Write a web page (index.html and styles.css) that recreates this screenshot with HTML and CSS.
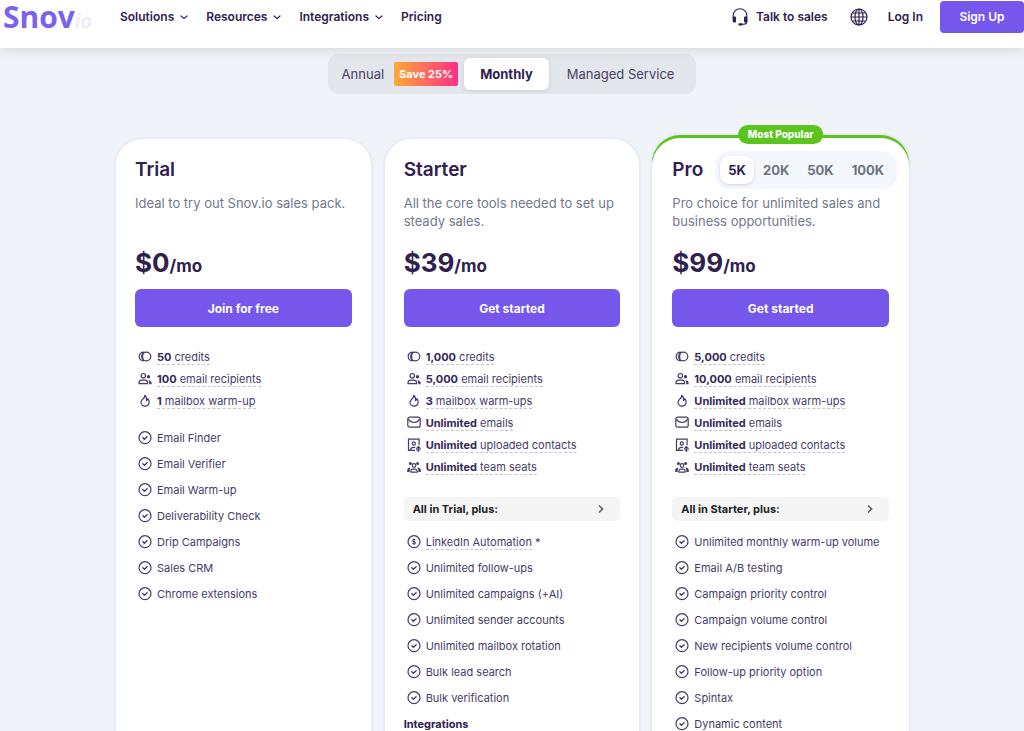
FILE: index.html
```html
<!DOCTYPE html>
<html lang="en">
<head>
<meta charset="utf-8">
<meta name="viewport" content="width=device-width, initial-scale=1">
<title>Snov.io Pricing</title>
<link rel="stylesheet" href="styles.css">
</head>
<body>
<svg class="sprite" aria-hidden="true">
  <symbol id="chevron" viewBox="0 0 8 5"><path d="M1 1l3 2.600 3-2.600" fill="none" stroke="currentColor" stroke-width="1.200" stroke-linecap="round" stroke-linejoin="round"/></symbol>
  <symbol id="headset" viewBox="0 0 16 18"><path d="M1.200 11V7.500a6.800 6.800 0 0 1 13.600 0V13.500q0 2.600-3 2.700H10" fill="none" stroke="currentColor" stroke-width="1.100"/><rect x=".7" y="8.500" width="3.300" height="6" rx="1" fill="currentColor"/><rect x="12" y="8.500" width="3.300" height="6" rx="1" fill="currentColor"/><rect x="6.300" y="15.300" width="4.500" height="2.200" rx="1.100" fill="currentColor"/></symbol>
  <symbol id="globe" viewBox="0 0 18 18"><g fill="none" stroke="currentColor" stroke-width="1.200"><circle cx="9" cy="9" r="8"/><ellipse cx="9" cy="9" rx="4" ry="8"/><path d="M9 1v16M1 9h16M2.500 5h13M2.500 13h13"/></g></symbol>
  <symbol id="credits" viewBox="0 0 14 14"><g fill="none" stroke="currentColor" stroke-width="1.200"><ellipse cx="8.200" cy="6.500" rx="4.600" ry="4.300"/><path d="M5.800 2.200C2.800 2.200 1.200 4 1.200 6.500s1.600 4.300 4.600 4.300M5.800 2.200Q4.600 4 4.600 6.500t1.200 4.300"/></g></symbol>
  <symbol id="people" viewBox="0 0 14 14"><g fill="none" stroke="currentColor" stroke-width="1.200"><circle cx="5.300" cy="3.700" r="2.200"/><path d="M1 11.700V10.500q.3-2.300 2.800-2.300h3Q9.300 8.200 9.600 10.500v1.200z" stroke-linejoin="round"/></g><circle cx="10.500" cy="4.700" r="1.700" fill="currentColor"/><path d="M10.300 8.200q3 .1 3.300 2.500v1.600h-2.400V10.500q0-1.300-.9-2.300z" fill="currentColor"/></symbol>
  <symbol id="flame" viewBox="0 0 14 14"><path d="M6.700 1.300Q7 3.700 4.600 5.300 3 6.700 3 8.200a4.100 3.900 0 0 0 8.200 0Q11.200 6.200 9.800 4.700q-.2 1.600-1.300 2Q9 2.900 6.700 1.300z" fill="none" stroke="currentColor" stroke-width="1.200" stroke-linejoin="round"/></symbol>
  <symbol id="mail" viewBox="0 0 14 14"><g fill="none" stroke="currentColor" stroke-width="1.200" stroke-linejoin="round"><rect x=".8" y="1.200" width="12.400" height="10" rx="2"/><path d="M1.200 3.200Q3.500 6.500 7 6.500T12.800 3.200"/></g></symbol>
  <symbol id="contacts" viewBox="0 0 14 14"><g fill="none" stroke="currentColor" stroke-width="1.200"><path d="M8 12.400H1.500V1.200h10.600v6"/><circle cx="6.800" cy="5.500" r="1.600"/><path d="M3.500 12q.2-2.700 3.300-2.700h1.400M11.300 14V9M9.200 10.800L11.300 8.700l2.200 2.100M9.200 12h4.400"/></g></symbol>
  <symbol id="team" viewBox="0 0 14 14"><g fill="none" stroke="currentColor" stroke-width="1.200"><circle cx="7" cy="5.500" r="1.800"/><path d="M3.800 12.100v-1q.2-2 2-2h2.400q1.800 0 2 2v1z" stroke-linejoin="round"/></g><g fill="currentColor"><circle cx="3.400" cy="3.500" r="1.500"/><circle cx="10.600" cy="3.500" r="1.500"/><path d="M.2 12v-2Q.6 7.500 3.600 7.500q-1 1.200-1 4.500zM13.800 12v-2Q13.400 7.500 10.400 7.500q1 1.200 1 4.500z"/></g></symbol>
  <symbol id="check" viewBox="0 0 14 14"><g fill="none" stroke="currentColor" stroke-width="1.200"><circle cx="7" cy="6.700" r="6"/><path d="M4.900 6.700l1.500 1.500 2.700-2.500" stroke-linecap="round" stroke-linejoin="round" stroke-width="1.400"/></g></symbol>
  <symbol id="coin" viewBox="0 0 14 14"><g fill="none" stroke="currentColor" stroke-width="1.200"><circle cx="7" cy="6.700" r="6"/><path d="M8.600 5.200Q8.300 4.400 7 4.400q-1.600 0-1.600 1.100T7 6.700t1.600 1.200T7 9q-1.300 0-1.600-.8M7 3.500v6.400" stroke-width="1"/></g></symbol>
  <symbol id="arrow" viewBox="0 0 8 10"><path d="M2 1.500L5.500 5 2 8.500" fill="none" stroke="currentColor" stroke-width="1.700"/></symbol>
</svg>

<header class="header">
  <a class="logo" href="#">Snov<span class="logo-suffix">io</span></a>
  <nav class="nav">
    <a href="#">Solutions <svg class="chevron"><use href="#chevron"/></svg></a>
    <a href="#">Resources <svg class="chevron"><use href="#chevron"/></svg></a>
    <a href="#">Integrations <svg class="chevron"><use href="#chevron"/></svg></a>
    <a href="#">Pricing</a>
  </nav>
  <div class="account">
    <a class="talk" href="#"><svg class="headset"><use href="#headset"/></svg>Talk to sales</a>
    <button class="language" type="button" aria-label="Language"><svg class="globe"><use href="#globe"/></svg></button>
    <a href="#">Log In</a>
    <a class="signup" href="#">Sign Up</a>
  </div>
</header>

<main class="main">
  <div class="periods">
    <button class="period" type="button">Annual <span class="save">Save 25%</span></button>
    <button class="period period-active" type="button">Monthly</button>
    <button class="period period-managed" type="button">Managed Service</button>
  </div>

  <div class="plans">
    <section class="plan">
      <div class="plan-head"><h2>Trial</h2></div>
      <p class="summary">Ideal to try out Snov.io sales pack.</p>
      <p class="price">$0<span>/mo</span></p>
      <button class="cta" type="button">Join for free</button>
      <ul class="limits">
        <li><svg><use href="#credits"/></svg><span><b>50</b> credits</span></li>
        <li><svg><use href="#people"/></svg><span><b>100</b> email recipients</span></li>
        <li><svg><use href="#flame"/></svg><span><b>1</b> mailbox warm-up</span></li>
      </ul>
      <ul class="features">
        <li><svg><use href="#check"/></svg>Email Finder</li>
        <li><svg><use href="#check"/></svg>Email Verifier</li>
        <li><svg><use href="#check"/></svg>Email Warm-up</li>
        <li><svg><use href="#check"/></svg>Deliverability Check</li>
        <li><svg><use href="#check"/></svg>Drip Campaigns</li>
        <li><svg><use href="#check"/></svg>Sales CRM</li>
        <li><svg><use href="#check"/></svg>Chrome extensions</li>
      </ul>
    </section>

    <section class="plan">
      <div class="plan-head"><h2>Starter</h2></div>
      <p class="summary">All the core tools needed to set up steady sales.</p>
      <p class="price">$39<span>/mo</span></p>
      <button class="cta" type="button">Get started</button>
      <ul class="limits">
        <li><svg><use href="#credits"/></svg><span><b>1,000</b> credits</span></li>
        <li><svg><use href="#people"/></svg><span><b>5,000</b> email recipients</span></li>
        <li><svg><use href="#flame"/></svg><span><b>3</b> mailbox warm-ups</span></li>
        <li><svg><use href="#mail"/></svg><span><b>Unlimited</b> emails</span></li>
        <li><svg><use href="#contacts"/></svg><span><b>Unlimited</b> uploaded contacts</span></li>
        <li><svg><use href="#team"/></svg><span><b>Unlimited</b> team seats</span></li>
      </ul>
      <button class="includes" type="button">All in Trial, plus:<svg><use href="#arrow"/></svg></button>
      <ul class="features">
        <li><svg><use href="#coin"/></svg><span class="hint">LinkedIn Automation</span>&nbsp;*</li>
        <li><svg><use href="#check"/></svg>Unlimited follow-ups</li>
        <li><svg><use href="#check"/></svg>Unlimited campaigns (+AI)</li>
        <li><svg><use href="#check"/></svg>Unlimited sender accounts</li>
        <li><svg><use href="#check"/></svg>Unlimited mailbox rotation</li>
        <li><svg><use href="#check"/></svg>Bulk lead search</li>
        <li><svg><use href="#check"/></svg>Bulk verification</li>
      </ul>
      <h3>Integrations</h3>
    </section>

    <section class="plan plan-popular">
      <span class="badge">Most Popular</span>
      <div class="plan-head">
        <h2>Pro</h2>
        <div class="tiers">
          <button class="tier tier-active" type="button">5K</button>
          <button class="tier" type="button">20K</button>
          <button class="tier" type="button">50K</button>
          <button class="tier" type="button">100K</button>
        </div>
      </div>
      <p class="summary">Pro choice for unlimited sales and business opportunities.</p>
      <p class="price">$99<span>/mo</span></p>
      <button class="cta" type="button">Get started</button>
      <ul class="limits">
        <li><svg><use href="#credits"/></svg><span><b>5,000</b> credits</span></li>
        <li><svg><use href="#people"/></svg><span><b>10,000</b> email recipients</span></li>
        <li><svg><use href="#flame"/></svg><span><b>Unlimited</b> mailbox warm-ups</span></li>
        <li><svg><use href="#mail"/></svg><span><b>Unlimited</b> emails</span></li>
        <li><svg><use href="#contacts"/></svg><span><b>Unlimited</b> uploaded contacts</span></li>
        <li><svg><use href="#team"/></svg><span><b>Unlimited</b> team seats</span></li>
      </ul>
      <button class="includes" type="button">All in Starter, plus:<svg><use href="#arrow"/></svg></button>
      <ul class="features">
        <li><svg><use href="#check"/></svg>Unlimited monthly warm-up volume</li>
        <li><svg><use href="#check"/></svg>Email A/B testing</li>
        <li><svg><use href="#check"/></svg>Campaign priority control</li>
        <li><svg><use href="#check"/></svg>Campaign volume control</li>
        <li><svg><use href="#check"/></svg>New recipients volume control</li>
        <li><svg><use href="#check"/></svg>Follow-up priority option</li>
        <li><svg><use href="#check"/></svg>Spintax</li>
        <li><svg><use href="#check"/></svg>Dynamic content</li>
      </ul>
    </section>
  </div>
</main>
</body>
</html>
```

FILE: styles.css
```css
* { box-sizing: border-box; }

html { scrollbar-width: none; }

body {
  margin: 0;
  background: #f0f3f8;
  color: #2f2050;
  font-family: Inter, "Liberation Sans", sans-serif;
}

h2, h3, p, ul { margin: 0; padding: 0; }
ul { list-style: none; }
a { color: inherit; text-decoration: none; }
button { margin: 0; padding: 0; border: 0; background: none; color: inherit; font: inherit; cursor: pointer; }
.sprite { display: none; }

/* Header */
.header {
  position: relative;
  display: flex;
  align-items: flex-start;
  height: 48px;
  padding-left: 3px;
  background: #fff;
  box-shadow: 0 2px 10px rgba(47, 52, 60, .14);
  font-size: 12px;
  font-weight: 600;
  line-height: 34px;
}
.logo {
  width: 117px;
  color: #7b61ee;
  font: 700 30px/34px "Open Sans", sans-serif;
}
.logo-suffix { color: #eee6fd; font-size: 20px; font-style: italic; font-weight: 600; }
.nav { display: flex; gap: 18px; }
.nav a { display: flex; align-items: center; gap: 6px; }
.chevron { width: 8px; height: 5px; }
.account { display: flex; align-items: center; margin-left: auto; }
.talk { display: flex; align-items: center; gap: 8px; }
.headset { width: 16px; height: 18px; }
.language { display: flex; margin: 0 20px 0 22px; }
.globe { width: 18px; height: 18px; }
.signup {
  width: 84px;
  margin-left: 17px;
  border-radius: 4px;
  background: #7558eb;
  color: #fff;
  line-height: 32px;
  text-align: center;
}

/* Billing period */
.main { padding-top: 6px; }
.periods {
  display: flex;
  align-items: center;
  width: fit-content;
  height: 40px;
  margin: 0 auto;
  padding: 0 4px 0 14px;
  border-radius: 10px;
  background: #e3e6eb;
  color: #4b4168;
  font-size: 13px;
}
.period { display: flex; align-items: center; gap: 10px; }
.save {
  padding: 0 5px;
  border-radius: 2px;
  background: linear-gradient(90deg, #ffa936, #ff2f87);
  color: #fff;
  font-size: 11px;
  font-weight: 700;
  line-height: 24px;
}
.period-active {
  height: 32px;
  margin-left: 6px;
  padding: 0 16px;
  border-radius: 6px;
  background: #fff;
  box-shadow: 0 1px 4px rgba(47, 52, 80, .14);
  color: #2f2050;
  font-weight: 700;
}
.period-managed { padding: 0 18px; }

/* Plans */
.plans {
  display: grid;
  grid-template-columns: repeat(3, minmax(0, 1fr));
  gap: 12px;
  max-width: 794px;
  margin: 44px auto 0;
}
.plan {
  position: relative;
  display: flex;
  flex-direction: column;
  padding: 12px 19px 24px;
  border: 1px solid #e9edf5;
  border-radius: 28px 28px 0 0;
  background: #fff;
  box-shadow: 0 0 3px rgba(70, 90, 130, .08);
}
.plan-popular {
  margin-top: -3px;
  padding: 16px 20px 24px;
  border: 0;
  box-shadow: inset 0 3px 0 #5bc41f, 0 0 3px rgba(70, 90, 130, .2);
}
.badge {
  position: absolute;
  top: -10px;
  left: 50%;
  padding: 0 10px;
  border-radius: 10px;
  background: #5bc41f;
  color: #fff;
  font-size: 10px;
  font-weight: 800;
  line-height: 19px;
  white-space: nowrap;
  transform: translateX(-50%);
}
.plan-head { display: flex; align-items: center; gap: 12px; height: 38px; }
.plan h2 { font-size: 19px; font-weight: 600; line-height: 24px; }
.tiers {
  display: flex;
  flex: none;
  align-items: center;
  height: 38px;
  padding: 0 4px 0 5px;
  border-radius: 14px;
  background: #f4f7fe;
}
.tier { height: 28px; padding: 0 9px; border-radius: 9px; color: #6c737f; font-size: 13px; font-weight: 700; }
.tier-active { padding: 0 8px; background: #fff; box-shadow: 0 1px 3px rgba(47, 52, 80, .18); color: #2f2050; }
.summary { min-height: 36px; margin-top: 5px; color: #73798a; font-size: 13px; line-height: 18px; }
.price { margin-top: 17px; font-size: 26px; font-weight: 700; line-height: 32px; }
.price span { font-size: 17px; }
.cta {
  height: 38px;
  margin-top: 7px;
  border-radius: 6px;
  background: #7558eb;
  color: #fff;
  font-size: 12px;
  font-weight: 700;
}
.limits { margin-top: 19px; color: #463b68; font-size: 11px; }
.limits li { height: 22px; }
.features li { height: 26px; }
.limits li, .features li { display: flex; align-items: center; }
.limits svg, .features svg { flex: none; width: 14px; height: 14px; margin: 0 5px 0 3px; }
.limits span, .hint { border-bottom: 1px dashed #c6c4d0; line-height: 14px; }
.limits b { color: #352759; font-weight: 700; }
.features { margin-top: 13px; color: #463b68; font-size: 11px; }
.includes {
  display: flex;
  align-items: center;
  justify-content: space-between;
  height: 24px;
  margin-top: 19px;
  padding: 0 15px 0 9px;
  border-radius: 5px;
  background: #f5f5f5;
  color: #222;
  font-size: 11px;
  font-weight: 700;
}
.includes svg { width: 8px; height: 10px; color: #59636b; }
.includes + .features { margin-top: 8px; }
.plan h3 { margin-top: 6px; font-size: 11px; font-weight: 700; line-height: 14px; }
```
